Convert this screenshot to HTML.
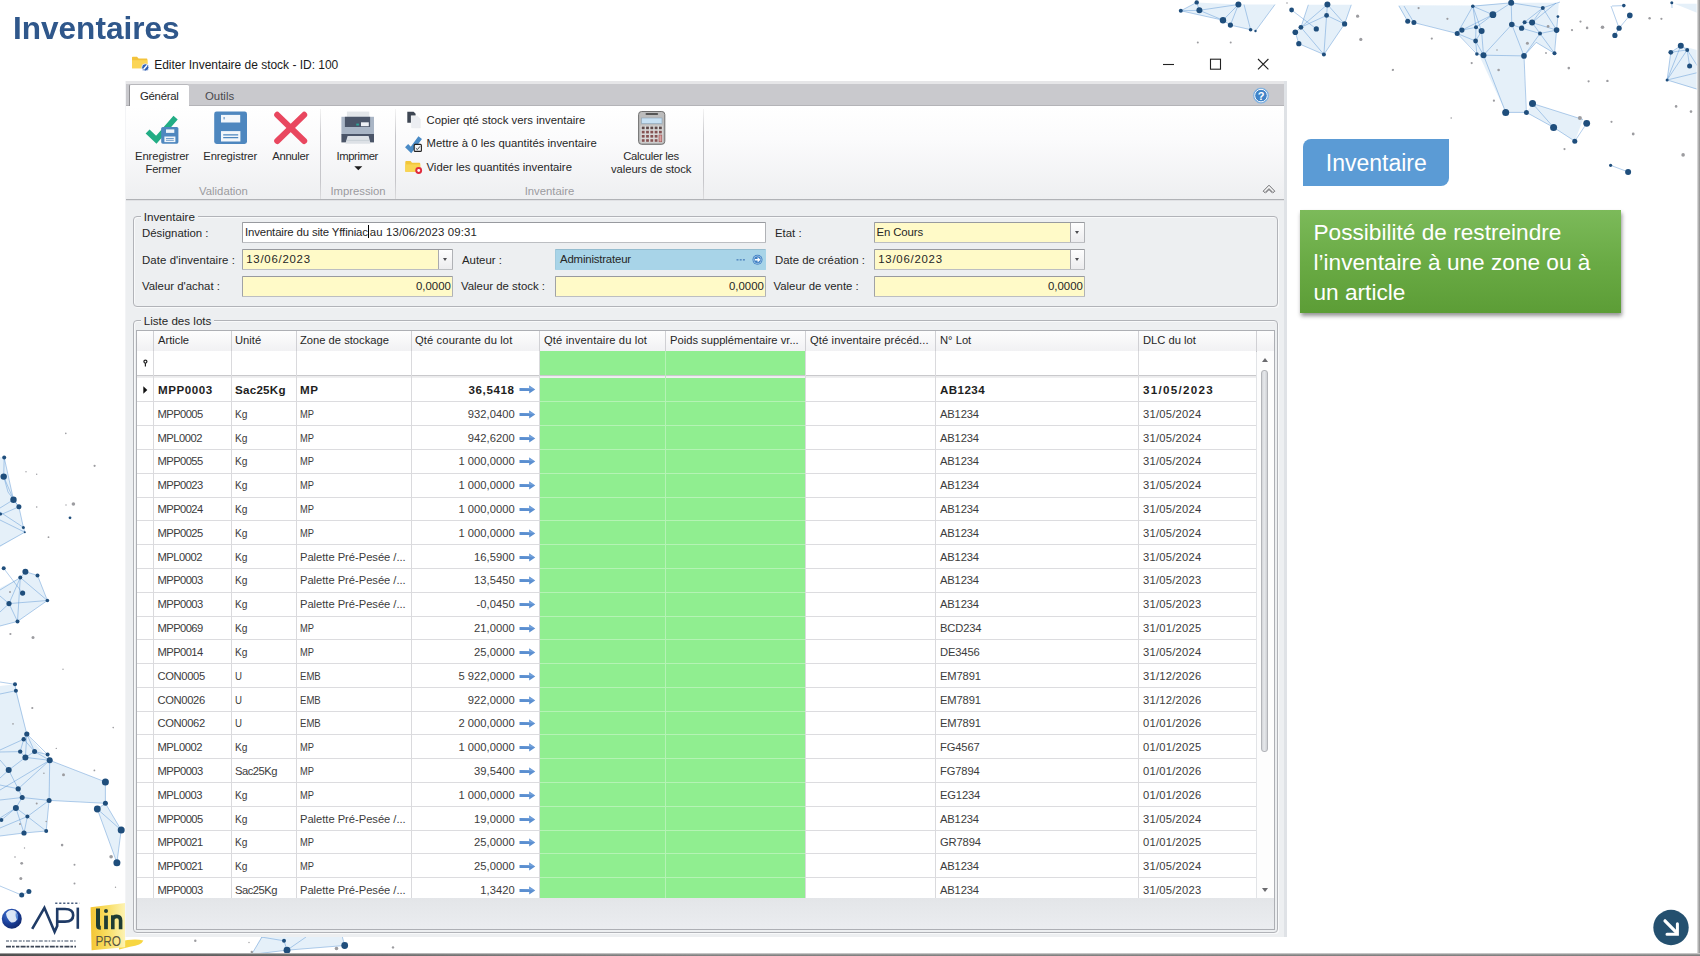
<!DOCTYPE html>
<html lang="fr">
<head>
<meta charset="utf-8">
<title>Inventaires</title>
<style>
*{box-sizing:border-box;margin:0;padding:0}
html,body{width:1700px;height:956px;overflow:hidden;background:#fff}
body{position:relative;font-family:"Liberation Sans",sans-serif;color:#222}
.abs{position:absolute}
.t{position:absolute;white-space:pre;line-height:1;font-size:11.2px;color:#262626}
#title{left:13px;top:10px;transform:translateY(0.2px);will-change:transform;font-size:31.55px;font-weight:bold;color:#2f578b;letter-spacing:0px;line-height:36px;position:absolute;white-space:pre}
#winbg{position:absolute;left:125px;top:81px;width:1162px;height:855.6px;background:#edeff1;border-right:3px solid #dfe2e6;border-left:1.5px solid #f3f4f6}
#win{position:absolute;left:126px;top:47px;width:1160px;height:890px}
#tbar{position:absolute;left:0;top:0;width:1160px;height:34px;background:transparent}
#tabs{position:absolute;left:0;top:34px;width:1158px;height:25px;background:#c9c9cd;border-top:3px solid #e6e6e8;border-bottom:1px solid #b4b4b8}
#tabon{position:absolute;left:3px;top:37px;width:60px;height:22px;background:#fff;border-left:1px solid #909094;border-top:1px solid #b8b8bc;border-radius:2px 2px 0 0}
#rib{position:absolute;left:0;top:59px;width:1158px;height:94px;background:linear-gradient(#ffffff 0%,#fbfbfc 35%,#eeeff1 100%);border-bottom:1px solid #b0b2b6;box-shadow:0 1px 0 #e0e1e4}
.vsep{position:absolute;top:62px;width:1px;height:90px;background:linear-gradient(#f4f4f4,#c6c6ca 30%,#c6c6ca 80%,#dcdcde)}
.rl{position:absolute;white-space:pre;font-size:11.3px;line-height:13px;color:#2a2a2a;text-align:center;transform:translateX(-50%)}
.gl{position:absolute;white-space:pre;font-size:11.3px;line-height:13px;color:#9b9b9f;text-align:center;transform:translateX(-50%)}
.gb{position:absolute;border:1px solid #b1b3b8;border-radius:4px;box-shadow:inset 1px 1px 0 #f8f9fa,1px 1px 0 #f8f9fa}
.gbl{position:absolute;background:#edeff1;padding:0 3px;font-size:11.4px;line-height:12px;color:#262626;white-space:pre}
.fl{position:absolute;white-space:pre;font-size:11.4px;line-height:13px;color:#262626}
.fld{position:absolute;height:21px;border:1px solid #aaaaae;border-color:#989a9f #b0b2b6 #bcbec2 #a0a2a6;border-radius:1px;font-size:11.4px;line-height:18px;color:#262626;white-space:pre;padding:0 3px;overflow:hidden}
.y{background:#fffac8}
.dd{position:absolute;right:0;top:0;width:14px;height:19px;border-left:1px solid #aaaaae;background:linear-gradient(#fefefe,#ececee)}
.dd:after{content:"";position:absolute;left:3.5px;top:7.5px;border:2.8px solid transparent;border-top:3.2px solid #4c4c50;border-bottom:none}
#grid{position:absolute;left:10px;top:283px;width:1139px;height:599px;border:1px solid #adafb4;background:linear-gradient(#e2e4e7 0%,#e2e4e7 94%,#ebedf0 100%);overflow:hidden}
#ghead{position:absolute;left:0;top:0;width:1137px;height:21px;background:linear-gradient(#fdfdfd,#f1f1f3);border-bottom:1px solid #c4c4c8}
.hc{position:absolute;top:0;height:20px;border-right:1px solid #d0d0d4;font-size:11.2px;line-height:19px;padding-left:4px;color:#262626;white-space:pre;overflow:hidden}
#gbody{position:absolute;left:0;top:21px;width:1119px;height:547px;background:#fff;overflow:hidden}
.gr{background:#90ee90}
.vl{position:absolute;top:0;width:1px;height:547px;background:#dadadd}
.vlg{position:absolute;top:0;width:1px;height:547px;background:#b4f3b4}
.hl{position:absolute;left:0;width:1119px;height:1px;background:#dcdcdf}
.hlg{position:absolute;height:1px;background:#b4f3b4}
.c{position:absolute;white-space:pre;font-size:11.2px;line-height:13px;color:#3c3c3c}
.ca{letter-spacing:-0.35px}
.b{font-weight:bold;color:#1e1e1e;font-size:11.6px}
.r{text-align:right}
</style>
</head>
<body>
<svg class="abs" style="left:0;top:0" width="1700" height="956" viewBox="0 0 1700 956">
<g fill="#cfe3f4" fill-opacity="0.55" stroke="none">
<polygon points="1180.8,10.8 1196.7,2.4 1238.4,4.5 1275.0,4.5 1255.5,31.0 1250.6,29.7 1230.4,25.1 1223.0,20.2"/>
<polygon points="1308.3,4.8 1351.3,4.8 1344.6,23.9 1323.9,54.5 1298.8,43.7 1295.3,32.3 1300.9,27.3"/>
<polygon points="1397.9,5.3 1472.2,5.6 1511.8,2.8 1558.8,2.8 1556.9,30.1 1554.1,53.3 1536.2,42.4 1524.0,55.9 1525.9,112.4 1505.7,112.4 1478.8,54.6 1457.2,33.5 1413.9,22.6 1407.3,21.1"/>
<polygon points="1532.5,103.5 1583.0,119.5 1574.8,141.2 1553.6,127.4 1526.4,112.4"/>
<polygon points="1670.8,52.3 1680.8,45.7 1700.0,50.8 1700.0,90.4 1667.1,80.0"/>
<polygon points="1674.6,3.8 1700.0,3.8 1700.0,14.1"/>
<polygon points="0.0,457.0 4.2,457.4 13.5,499.7 18.9,506.8 23.4,527.4 24.8,532.2 0.0,547.0"/>
<polygon points="0.0,588.0 20.3,577.6 25.4,571.7 37.5,575.4 47.4,600.5 17.5,621.4 0.0,626.0"/>
<polygon points="0.0,686.0 15.0,684.3 26.8,734.0 49.7,760.3 105.4,781.9 105.4,803.3 49.1,800.4 46.2,831.0 24.0,833.0 0.0,836.0"/>
<polygon points="97.3,809.0 105.4,803.3 121.2,830.1 116.9,862.7"/>
<polygon points="261.2,936.8 342.4,936.8 344.7,945.5 287.0,950.2 251.8,954.4"/>
</g>
<g stroke="#4f8dd0" stroke-width="0.7" stroke-opacity="0.62" fill="none">
<path d="M1180.8 10.8L1196.7 2.4 M1196.7 2.4L1199.4 10.3 M1199.4 10.3L1180.8 10.8 M1180.8 10.8L1223.0 20.2 M1223.0 20.2L1230.4 25.1 M1230.4 25.1L1238.4 4.5 M1238.4 4.5L1199.4 10.3 M1199.4 10.3L1223.0 20.2 M1223.0 20.2L1238.4 4.5 M1244.0 4.5L1250.6 29.7 M1275.0 4.5L1255.5 31.0 M1230.4 25.1L1250.6 29.7 M1291.6 10.0L1316.3 28.9 M1327.4 4.5L1326.6 15.4 M1326.6 15.4L1300.9 27.3 M1300.9 27.3L1295.3 32.3 M1295.3 32.3L1298.8 43.7 M1298.8 43.7L1323.9 54.5 M1323.9 54.5L1344.6 23.9 M1344.6 23.9L1327.4 4.5 M1326.6 15.4L1344.6 23.9 M1326.6 15.4L1323.9 54.5 M1300.9 27.3L1323.9 54.5 M1308.3 4.8L1300.9 27.3 M1351.3 4.8L1344.6 23.9 M1327.4 4.5L1300.9 27.3 M1407.7 21.3L1399.0 6.0 M1413.9 22.6L1404.0 6.0 M1413.9 22.6L1457.2 33.5 M1457.2 33.5L1461.9 30.1 M1461.9 30.1L1476.0 27.3 M1476.0 27.3L1481.6 31.1 M1481.6 31.1L1475.6 41.0 M1475.6 41.0L1457.2 33.5 M1472.8 6.2L1457.2 33.5 M1472.8 6.2L1476.0 27.3 M1476.0 27.3L1475.6 41.0 M1475.6 41.0L1483.5 55.2 M1483.5 55.2L1481.6 31.1 M1481.6 31.1L1472.8 6.2 M1472.8 6.2L1492.9 14.7 M1492.9 14.7L1461.9 30.1 M1492.9 14.7L1476.0 27.3 M1457.2 33.5L1476.9 54.0 M1476.9 54.0L1483.5 55.2 M1475.6 41.0L1476.9 54.0 M1472.8 6.2L1511.2 2.8 M1511.2 2.8L1511.8 24.5 M1511.8 24.5L1521.6 28.2 M1521.6 28.2L1524.6 22.2 M1524.6 22.2L1532.1 22.6 M1532.1 22.6L1542.8 7.9 M1542.8 7.9L1511.2 2.8 M1483.5 55.2L1511.8 24.5 M1483.5 55.2L1524.0 55.9 M1524.0 55.9L1511.8 24.5 M1492.9 14.7L1511.2 2.8 M1524.6 22.2L1542.8 7.9 M1532.1 22.6L1540.0 33.5 M1540.0 33.5L1556.6 30.1 M1556.6 30.1L1557.9 16.6 M1542.8 7.9L1556.6 30.1 M1556.6 30.1L1554.5 53.3 M1554.5 53.3L1540.0 33.5 M1521.6 28.2L1540.0 33.5 M1532.1 22.6L1556.6 30.1 M1524.0 55.9L1540.0 33.5 M1554.5 53.3L1536.2 42.4 M1536.2 42.4L1524.0 55.9 M1542.8 7.9L1560.0 2.0 M1532.1 22.6L1556.0 3.0 M1483.5 55.2L1505.7 112.4 M1505.7 112.4L1526.4 112.4 M1526.4 112.4L1524.0 55.9 M1526.4 112.4L1553.6 127.4 M1553.6 127.4L1574.8 141.2 M1574.8 141.2L1586.7 123.3 M1532.5 103.5L1553.6 127.4 M1532.5 103.5L1583.0 119.5 M1610.6 165.3L1628.1 171.9 M1623.8 5.6L1612.0 6.0 M1611.0 6.0L1619.1 28.2 M1629.8 15.4L1619.1 28.2 M1619.1 28.2L1614.9 35.4 M1671.8 2.8L1672.0 8.0 M1670.8 52.3L1680.8 45.7 M1680.8 45.7L1687.2 49.9 M1687.2 49.9L1689.6 65.9 M1670.8 52.3L1667.1 80.0 M1667.1 80.0L1700.0 90.0 M1680.8 45.7L1667.1 80.0 M1687.2 49.9L1700.0 70.0 M1667.1 80.0L1700.0 72.0 M1687.2 49.9L1667.1 80.0 M1670.8 52.3L1687.2 49.9 M4.2 457.4L13.5 499.7 M13.5 499.7L18.9 506.8 M18.9 506.8L23.4 527.4 M23.4 527.4L24.8 532.2 M24.8 532.2L0.0 546.0 M3.7 476.6L13.5 499.7 M4.2 457.4L3.7 476.6 M18.9 506.8L0.0 515.0 M23.4 527.4L0.0 512.0 M13.5 499.7L0.0 508.0 M3.7 476.6L8.0 492.0 M8.0 492.0L18.9 506.8 M24.8 532.2L0.0 520.0 M3.7 568.3L22.6 593.1 M20.3 577.6L25.4 571.7 M25.4 571.7L37.5 575.4 M37.5 575.4L47.4 600.5 M47.4 600.5L17.5 621.4 M17.5 621.4L9.0 603.6 M9.0 603.6L20.3 577.6 M20.3 577.6L47.4 600.5 M47.4 600.5L9.0 603.6 M9.0 603.6L0.0 596.0 M9.0 603.6L0.0 612.0 M17.5 621.4L0.0 626.0 M20.3 577.6L0.0 590.0 M20.3 577.6L17.5 621.4 M0.0 682.0L15.0 684.3 M15.0 684.3L15.9 690.7 M15.9 690.7L0.0 694.0 M15.9 690.7L26.8 734.0 M26.8 734.0L23.7 739.2 M23.7 739.2L20.2 751.6 M20.2 751.6L25.4 757.4 M25.4 757.4L34.6 751.6 M34.6 751.6L26.8 734.0 M23.7 739.2L34.6 751.6 M34.6 751.6L47.6 754.5 M47.6 754.5L49.7 760.3 M49.7 760.3L25.4 757.4 M26.8 734.0L25.4 757.4 M23.7 739.2L0.0 750.0 M20.2 751.6L0.0 752.0 M25.4 757.4L8.7 770.1 M8.7 770.1L0.0 760.0 M26.8 734.0L47.6 754.5 M34.6 751.6L49.7 760.3 M49.7 760.3L105.4 781.9 M105.4 781.9L105.4 803.3 M105.4 803.3L49.1 800.4 M49.1 800.4L49.7 760.3 M49.7 760.3L18.2 788.8 M18.2 788.8L8.7 770.1 M18.2 788.8L22.2 797.5 M22.2 797.5L15.9 807.9 M15.9 807.9L1.4 820.0 M18.2 788.8L0.0 785.0 M22.2 797.5L0.0 800.0 M49.1 800.4L22.2 797.5 M49.1 800.4L27.4 816.5 M27.4 816.5L15.9 807.9 M15.9 807.9L24.0 833.0 M24.0 833.0L46.2 831.0 M46.2 831.0L27.4 816.5 M27.4 816.5L24.0 833.0 M46.2 831.0L49.1 800.4 M24.0 833.0L0.0 836.0 M27.4 816.5L0.0 828.0 M15.9 807.9L0.0 818.0 M49.7 760.3L0.0 790.0 M8.7 770.1L0.0 778.0 M105.4 803.3L97.3 809.0 M97.3 809.0L121.2 830.1 M121.2 830.1L116.9 862.7 M116.9 862.7L97.3 809.0 M105.4 803.3L121.2 830.1 M28.9 891.6L21.7 895.1 M21.7 895.1L0.0 886.0 M261.2 937.0L284.0 940.8 M284.0 940.8L287.0 950.2 M287.0 950.2L251.8 954.4 M287.0 950.2L306.0 937.0 M287.0 950.2L344.7 945.5 M344.7 945.5L342.4 937.0 M251.8 954.0L262.0 937.0"/>
</g>
<g fill="#1f4e7c">
<circle cx="1180.8" cy="10.8" r="2.0"/>
<circle cx="1196.7" cy="2.4" r="2.2"/>
<circle cx="1199.4" cy="10.3" r="3.0"/>
<circle cx="1238.4" cy="4.5" r="3.0"/>
<circle cx="1223.0" cy="20.2" r="3.2"/>
<circle cx="1230.4" cy="25.1" r="2.6"/>
<circle cx="1250.6" cy="29.7" r="1.8"/>
<circle cx="1255.5" cy="31.0" r="1.2"/>
<circle cx="1291.6" cy="10.0" r="2.4"/>
<circle cx="1327.4" cy="4.5" r="3.0"/>
<circle cx="1326.6" cy="15.4" r="2.4"/>
<circle cx="1344.6" cy="23.9" r="2.6"/>
<circle cx="1300.9" cy="27.3" r="2.4"/>
<circle cx="1295.3" cy="32.3" r="2.8"/>
<circle cx="1316.3" cy="28.9" r="2.6"/>
<circle cx="1298.8" cy="43.7" r="2.6"/>
<circle cx="1323.9" cy="54.5" r="2.0"/>
<circle cx="1407.7" cy="21.3" r="2.5"/>
<circle cx="1413.9" cy="22.6" r="2.5"/>
<circle cx="1457.2" cy="33.5" r="2.5"/>
<circle cx="1461.9" cy="30.1" r="2.6"/>
<circle cx="1476.0" cy="27.3" r="2.0"/>
<circle cx="1481.6" cy="31.1" r="3.0"/>
<circle cx="1475.6" cy="41.0" r="2.4"/>
<circle cx="1476.9" cy="54.0" r="1.8"/>
<circle cx="1483.5" cy="55.2" r="3.0"/>
<circle cx="1492.9" cy="14.7" r="3.4"/>
<circle cx="1472.8" cy="6.2" r="1.8"/>
<circle cx="1511.2" cy="2.8" r="3.0"/>
<circle cx="1511.8" cy="24.5" r="2.8"/>
<circle cx="1521.6" cy="28.2" r="2.6"/>
<circle cx="1524.6" cy="22.2" r="2.0"/>
<circle cx="1532.1" cy="22.6" r="3.0"/>
<circle cx="1542.8" cy="7.9" r="2.0"/>
<circle cx="1540.0" cy="33.5" r="2.0"/>
<circle cx="1556.6" cy="30.1" r="2.8"/>
<circle cx="1557.9" cy="16.6" r="1.4"/>
<circle cx="1554.5" cy="53.3" r="2.0"/>
<circle cx="1524.0" cy="55.9" r="2.8"/>
<circle cx="1532.5" cy="103.5" r="3.5"/>
<circle cx="1505.7" cy="112.4" r="3.5"/>
<circle cx="1526.4" cy="112.4" r="2.5"/>
<circle cx="1553.6" cy="127.4" r="3.5"/>
<circle cx="1586.7" cy="123.3" r="3.4"/>
<circle cx="1574.8" cy="141.2" r="2.5"/>
<circle cx="1610.6" cy="165.3" r="1.6"/>
<circle cx="1628.1" cy="171.9" r="3.0"/>
<circle cx="1623.8" cy="5.6" r="1.8"/>
<circle cx="1629.8" cy="15.4" r="2.8"/>
<circle cx="1619.1" cy="28.2" r="2.6"/>
<circle cx="1614.9" cy="35.4" r="2.6"/>
<circle cx="1671.8" cy="2.8" r="1.5"/>
<circle cx="1680.8" cy="45.7" r="3.0"/>
<circle cx="1670.8" cy="52.3" r="2.4"/>
<circle cx="1687.2" cy="49.9" r="2.0"/>
<circle cx="1689.6" cy="65.9" r="2.5"/>
<circle cx="1667.1" cy="80.0" r="1.5"/>
<circle cx="4.2" cy="457.4" r="2.0"/>
<circle cx="3.7" cy="476.6" r="3.2"/>
<circle cx="13.5" cy="499.7" r="3.2"/>
<circle cx="18.9" cy="506.8" r="2.5"/>
<circle cx="23.4" cy="527.4" r="1.5"/>
<circle cx="24.8" cy="532.2" r="1.0"/>
<circle cx="0.5" cy="514.0" r="1.6"/>
<circle cx="3.7" cy="568.3" r="2.0"/>
<circle cx="25.4" cy="571.7" r="3.0"/>
<circle cx="37.5" cy="575.4" r="2.0"/>
<circle cx="20.3" cy="577.6" r="2.0"/>
<circle cx="22.6" cy="593.1" r="2.6"/>
<circle cx="9.0" cy="603.6" r="2.6"/>
<circle cx="47.4" cy="600.5" r="1.8"/>
<circle cx="17.5" cy="621.4" r="2.0"/>
<circle cx="70.0" cy="517.8" r="1.4"/>
<circle cx="15.0" cy="684.3" r="2.0"/>
<circle cx="15.9" cy="690.7" r="2.0"/>
<circle cx="26.8" cy="734.0" r="2.6"/>
<circle cx="23.7" cy="739.2" r="2.2"/>
<circle cx="20.2" cy="751.6" r="2.2"/>
<circle cx="25.4" cy="757.4" r="3.0"/>
<circle cx="34.6" cy="751.6" r="2.5"/>
<circle cx="47.6" cy="754.5" r="2.0"/>
<circle cx="49.7" cy="760.3" r="3.0"/>
<circle cx="8.7" cy="770.1" r="3.0"/>
<circle cx="18.2" cy="788.8" r="2.6"/>
<circle cx="22.2" cy="797.5" r="2.5"/>
<circle cx="15.9" cy="807.9" r="3.0"/>
<circle cx="49.1" cy="800.4" r="2.5"/>
<circle cx="27.4" cy="816.5" r="2.0"/>
<circle cx="1.4" cy="820.0" r="2.0"/>
<circle cx="24.0" cy="833.0" r="2.6"/>
<circle cx="46.2" cy="831.0" r="2.0"/>
<circle cx="105.4" cy="781.9" r="3.5"/>
<circle cx="105.4" cy="803.3" r="2.5"/>
<circle cx="97.3" cy="809.0" r="3.4"/>
<circle cx="121.2" cy="830.1" r="3.5"/>
<circle cx="116.9" cy="862.7" r="3.5"/>
<circle cx="28.9" cy="891.6" r="2.5"/>
<circle cx="21.7" cy="895.1" r="2.5"/>
<circle cx="284.0" cy="940.8" r="2.0"/>
<circle cx="287.0" cy="950.2" r="3.4"/>
<circle cx="344.7" cy="945.5" r="3.4"/>
</g>
<g fill="#9c9ca0">
<circle cx="1357.6" cy="16.2" r="1.6"/>
<circle cx="1360.8" cy="39.4" r="1.6"/>
<circle cx="1197.8" cy="42.6" r="1.0"/>
<circle cx="1230.7" cy="42.6" r="1.0"/>
<circle cx="1393.0" cy="69.6" r="0.9"/>
<circle cx="1287.0" cy="3.0" r="0.8"/>
<circle cx="1418.6" cy="8.1" r="1.1"/>
<circle cx="1431.8" cy="38.6" r="1.1"/>
<circle cx="1447.4" cy="18.8" r="1.1"/>
<circle cx="1471.7" cy="63.1" r="1.1"/>
<circle cx="1392.8" cy="70.0" r="1.1"/>
<circle cx="1498.6" cy="70.0" r="1.3"/>
<circle cx="1493.9" cy="100.7" r="1.1"/>
<circle cx="1451.2" cy="118.0" r="0.8"/>
<circle cx="1527.4" cy="43.3" r="1.5"/>
<circle cx="1548.1" cy="26.4" r="1.4"/>
<circle cx="1568.8" cy="68.1" r="1.3"/>
<circle cx="1572.0" cy="30.1" r="1.1"/>
<circle cx="1580.5" cy="21.6" r="1.1"/>
<circle cx="1587.1" cy="27.9" r="1.3"/>
<circle cx="1602.5" cy="27.3" r="1.8"/>
<circle cx="1588.6" cy="81.3" r="1.1"/>
<circle cx="1607.4" cy="80.9" r="1.2"/>
<circle cx="1579.9" cy="118.0" r="2.0"/>
<circle cx="1611.5" cy="121.8" r="1.1"/>
<circle cx="1633.2" cy="134.0" r="1.4"/>
<circle cx="1564.5" cy="149.1" r="1.1"/>
<circle cx="1649.6" cy="18.3" r="1.2"/>
<circle cx="1661.4" cy="18.8" r="1.1"/>
<circle cx="1676.1" cy="106.4" r="1.3"/>
<circle cx="1691.0" cy="111.6" r="1.3"/>
<circle cx="1683.1" cy="154.9" r="1.8"/>
<circle cx="1497.0" cy="50.0" r="0.8"/>
<circle cx="1546.0" cy="53.0" r="0.9"/>
<circle cx="65.8" cy="433.4" r="0.8"/>
<circle cx="94.6" cy="465.8" r="1.1"/>
<circle cx="26.0" cy="471.8" r="0.7"/>
<circle cx="36.7" cy="474.3" r="0.7"/>
<circle cx="36.7" cy="507.0" r="0.8"/>
<circle cx="73.4" cy="504.0" r="1.8"/>
<circle cx="66.0" cy="505.0" r="0.7"/>
<circle cx="48.5" cy="537.2" r="0.9"/>
<circle cx="10.4" cy="634.0" r="1.1"/>
<circle cx="33.0" cy="637.4" r="1.5"/>
<circle cx="63.0" cy="669.3" r="0.7"/>
<circle cx="10.0" cy="592.0" r="1.0"/>
<circle cx="32.3" cy="708.0" r="1.1"/>
<circle cx="13.0" cy="723.9" r="0.8"/>
<circle cx="113.2" cy="727.6" r="0.8"/>
<circle cx="56.3" cy="748.4" r="0.7"/>
<circle cx="63.5" cy="774.7" r="1.5"/>
<circle cx="94.4" cy="770.4" r="0.9"/>
<circle cx="43.9" cy="773.2" r="0.8"/>
<circle cx="36.7" cy="803.6" r="1.0"/>
<circle cx="46.2" cy="821.5" r="0.8"/>
<circle cx="62.1" cy="845.1" r="1.3"/>
<circle cx="24.5" cy="848.0" r="0.7"/>
<circle cx="15.0" cy="857.0" r="0.8"/>
<circle cx="21.7" cy="863.3" r="1.4"/>
<circle cx="74.5" cy="864.8" r="1.0"/>
<circle cx="20.8" cy="878.6" r="1.5"/>
<circle cx="74.5" cy="883.5" r="1.0"/>
<circle cx="111.1" cy="856.7" r="1.8"/>
<circle cx="115.5" cy="887.3" r="0.7"/>
<circle cx="20.0" cy="824.0" r="1.0"/>
<circle cx="195.3" cy="940.8" r="1.2"/>
<circle cx="336.5" cy="948.5" r="1.8"/>
<circle cx="393.0" cy="947.4" r="1.2"/>
<circle cx="251.8" cy="952.0" r="1.2"/>
<circle cx="249.0" cy="942.5" r="0.7"/>
</g>
<defs>
<radialGradient id="sph" cx="0.35" cy="0.3" r="0.8"><stop offset="0" stop-color="#3b6fd0"/><stop offset="0.55" stop-color="#1b3f99"/><stop offset="1" stop-color="#0f2466"/></radialGradient>
<linearGradient id="yel" x1="0" y1="0" x2="1" y2="0"><stop offset="0" stop-color="#f4c534"/><stop offset="0.45" stop-color="#f8dc5e"/><stop offset="1" stop-color="#fdf3b4"/></linearGradient>
<linearGradient id="rb" x1="0" y1="0" x2="1" y2="0"><stop offset="0" stop-color="#fff"/><stop offset="0.35" stop-color="#c8c8c8"/><stop offset="1" stop-color="#8c8c8c"/></linearGradient>
<linearGradient id="bb" x1="0" y1="0" x2="1" y2="0"><stop offset="0" stop-color="#3c3c3c" stop-opacity="0.75"/><stop offset="0.5" stop-color="#4a4a4a" stop-opacity="0.4"/><stop offset="1" stop-color="#666" stop-opacity="0"/></linearGradient><linearGradient id="bv" x1="0" y1="0" x2="0" y2="1"><stop offset="0" stop-color="#e4e4e4"/><stop offset="0.35" stop-color="#a4a4a4"/><stop offset="1" stop-color="#747474"/></linearGradient>
</defs>
<!-- API logo -->
<circle cx="11.8" cy="918.8" r="10" fill="url(#sph)"/>
<path d="M6 913.5 Q8.5 908.8 14 910.2 Q18.5 912.5 17.6 918.2 Q16 923 11.2 922.4 Q6.5 919 6 913.5Z" fill="#e9f1fa" opacity="0.93"/>
<path d="M15.8 912.2 Q19.2 915.6 17.6 920.6 Q15 917.4 15.8 912.2Z" fill="#3f78d2" opacity="0.8"/>
<g fill="none" stroke="#1f3b66" stroke-width="2.6" stroke-linejoin="miter">
<path d="M32.2 928.8 L44.4 907.8 L54.6 931.8 L57.2 926 V909 H65 Q73.2 909 73.2 915.3 Q73.2 921.6 65 921.6 H58"/>
<path d="M77.8 907.6 V928.8"/>
</g>
<path d="M55.2 903.2 H79.4" stroke="#4a5f80" stroke-width="1.6" stroke-dasharray="2.2 1.8"/>
<path d="M6 941 H75.6" stroke="#7c8797" stroke-width="1.5" stroke-dasharray="3 1.2 1.6 1.4 4 1.6"/>
<path d="M6 946.6 H76" stroke="#3d4656" stroke-width="1.8" stroke-dasharray="5 1 2.6 1.4 3.4 1.2"/>
<!-- lin PRO -->
<path d="M119 941.4 Q134 938.4 143.4 940.4 Q141.6 945 130 946.8 L119 949.6Z" fill="#f6d22e" opacity="0.9"/>
<path d="M90.6 907.2 L125.2 903 V947.2 L91.6 950.2Z" fill="url(#yel)"/>
<g fill="none" stroke="#1f3c34" stroke-linecap="butt">
<path d="M98 908.4 V925.4 Q98 927.8 100.8 927.8" stroke-width="4"/>
<path d="M106 915.6 V929.2" stroke-width="3.8"/>
<circle cx="106" cy="911" r="2" fill="#1f3c34" stroke="none"/>
<path d="M112.8 929.2 V915.2 M112.8 919.4 Q113.4 916.4 116.8 916.4 Q120.6 916.4 120.6 920.6 V929.2" stroke-width="3.6"/>
</g>
<text x="95.4" y="945.6" font-family="Liberation Sans, sans-serif" font-size="15.4" fill="#5a5740" textLength="25.6" lengthAdjust="spacingAndGlyphs">PRO</text>
<!-- bottom-right arrow button -->
<circle cx="1671" cy="927.5" r="17.7" fill="#24506f"/>
<path d="M1665 920.8 L1675.6 931.6" stroke="#fff" stroke-width="3.2" stroke-linecap="round"/>
<path d="M1677.4 923.8 V934.2 H1667" fill="none" stroke="#fff" stroke-width="3" stroke-linecap="round" stroke-linejoin="miter"/>
<!-- slide edges -->
<rect x="1696.6" y="0" width="3.4" height="956" fill="url(#rb)"/>
<rect x="0" y="953" width="1700" height="3" fill="url(#bv)"/><rect x="0" y="953.6" width="700" height="2.4" fill="url(#bb)"/>

</svg>
<div id="title">Inventaires</div>
<div id="winbg"></div>
<div id="win">
<div id="tbar"></div>
<div id="tabs"></div><div id="tabon"></div>
<div class="t" style="left:14px;top:43px;font-size:11.4px;line-height:13px;letter-spacing:-0.3px">Général</div>
<div class="t" style="left:79px;top:43px;font-size:11.4px;line-height:13px;color:#4a4a4e">Outils</div>
<div id="rib"></div>
<div class="vsep" style="left:194px"></div>
<div class="vsep" style="left:268.5px"></div>
<div class="vsep" style="left:576.5px"></div>
<svg class="abs" style="left:0;top:59px" width="720" height="94" viewBox="126 106 720 94">
<!-- icon1: check + small floppy -->
<path d="M147.6 131.4 L156.3 139.8 L175.6 117.6" fill="none" stroke="#22ad85" stroke-width="5.6" stroke-linecap="butt" stroke-linejoin="miter"/>
<rect x="161.2" y="126.9" width="17.2" height="16.8" rx="1.6" fill="#4e87bf"/>
<rect x="166" y="129.4" width="8.3" height="3.5" fill="#eef4fa"/>
<rect x="164.4" y="136.5" width="11" height="5.6" fill="#eef4fa"/>
<path d="M166 138.5 H173.8 M166 140.3 H173.8" stroke="#4e87bf" stroke-width="0.8"/>
<!-- icon2: floppy -->
<rect x="214.2" y="111.6" width="32.8" height="32.4" rx="2.4" fill="#4e87bf"/>
<rect x="221" y="114.9" width="19.2" height="7.6" fill="#f3f7fb"/>
<rect x="223.6" y="117" width="1" height="2.4" fill="#4e87bf"/>
<rect x="221" y="131.1" width="19.4" height="10.4" fill="#f3f7fb"/>
<path d="M223.2 134.9 H238.2 M223.2 137.7 H238.2" stroke="#4e87bf" stroke-width="1.2"/>
<!-- icon3: red X -->
<path d="M277.2 114.8 L304.2 141 M304.2 114.8 L277.2 141" stroke="#e9475f" stroke-width="6" stroke-linecap="round"/>
<!-- printer -->
<rect x="346.9" y="111.6" width="22.4" height="6" fill="#e3e6e9"/>
<rect x="341.4" y="116.8" width="32.6" height="17.6" fill="#a9b5c5"/>
<rect x="344.9" y="116.8" width="25.2" height="10.2" fill="#4b5568"/>
<rect x="356.3" y="123.6" width="2.6" height="1.9" fill="#2ea89a"/>
<rect x="361" y="122.3" width="7.8" height="3.9" fill="#eef1f5"/>
<rect x="341.4" y="134" width="32.6" height="8.4" fill="#4b5568"/>
<path d="M347.6 136 H368.6 L370.6 143.8 H345.4Z" fill="#dde1e6"/>
<path d="M346.4 140.4 H369.8" stroke="#c2c8d0" stroke-width="0.7"/>
<path d="M354.3 166.2 H362.3 L358.3 170.2Z" fill="#1c1c1c"/>
<!-- small 1: copy -->
<path d="M407.3 111.8 H413.6 L415.6 113.8 V115.6 H410.9 V122.8 H407.3Z" fill="#3e4653"/>
<path d="M411.6 116.2 H417.4 L420.3 119 V127.8 H411.6Z" fill="#eceef2" stroke="#e0e3e8" stroke-width="0.4"/>
<!-- small 2: check + box -->
<path d="M406.6 145.6 L411 150 L420.2 137.6" fill="none" stroke="#4a8bc6" stroke-width="4.4"/>
<rect x="414.2" y="144.4" width="7.2" height="7" rx="1" fill="#f4f6f8" stroke="#222" stroke-width="1.1"/>
<path d="M415.8 148.2 L417.4 149.6 L420 146.4" fill="none" stroke="#333" stroke-width="0.9"/>
<!-- small 3: folder + red -->
<path d="M405.3 162 Q405.3 161.1 406.2 161.1 H410.6 L412 162.8 H419.4 Q420.2 162.8 420.2 163.6 V171.7 H405.3Z" fill="#f2c63a"/>
<path d="M405.3 164.4 H420.2 V171.7 H405.3Z" fill="#f8d552"/>
<circle cx="418.7" cy="170.5" r="3.4" fill="#e02b3c"/>
<circle cx="418.7" cy="170.5" r="1.4" fill="#fff"/>
<!-- calculator -->
<rect x="638.6" y="111.5" width="26.2" height="32.8" rx="3" fill="#bcbcbc" stroke="#707070" stroke-width="1"/>
<rect x="645.5" y="113.1" width="12.6" height="2" rx="1" fill="#555"/>
<rect x="641.6" y="118" width="20.4" height="5.6" fill="#c6e0f3" stroke="#8aa2b6" stroke-width="0.6"/>
<g fill="#d9d9d9"><rect x="640.6" y="125.6" width="22.2" height="17"/></g>
<g fill="#5c4a4a">
<rect x="641.8" y="126.6" width="2.8" height="2.6"/><rect x="646.1" y="126.6" width="2.8" height="2.6"/><rect x="650.4" y="126.6" width="2.8" height="2.6"/><rect x="654.7" y="126.6" width="2.8" height="2.6"/><rect x="659" y="126.6" width="2.8" height="2.6"/>
</g>
<g fill="#855252">
<rect x="641.8" y="130.8" width="2.8" height="2.6"/><rect x="646.1" y="130.8" width="2.8" height="2.6"/><rect x="650.4" y="130.8" width="2.8" height="2.6"/><rect x="654.7" y="130.8" width="2.8" height="2.6"/><rect x="659" y="130.8" width="2.8" height="2.6"/>
<rect x="641.8" y="135" width="2.8" height="2.6"/><rect x="646.1" y="135" width="2.8" height="2.6"/><rect x="650.4" y="135" width="2.8" height="2.6"/><rect x="654.7" y="135" width="2.8" height="2.6"/>
<rect x="641.8" y="139.2" width="2.8" height="2.6"/><rect x="646.1" y="139.2" width="2.8" height="2.6"/><rect x="650.4" y="139.2" width="2.8" height="2.6"/><rect x="654.7" y="139.2" width="2.8" height="2.6"/>
</g>
<rect x="659" y="135" width="2.8" height="6.8" fill="#d9a0a0" stroke="#9a4a4a" stroke-width="0.6"/>
</svg>
<div class="rl" style="left:36px;top:102.5px;letter-spacing:-0.12px">Enregistrer</div>
<div class="rl" style="left:37.3px;top:115.6px;letter-spacing:-0.1px">Fermer</div>
<div class="rl" style="left:104.2px;top:102.5px;letter-spacing:-0.12px">Enregistrer</div>
<div class="rl" style="left:164.6px;top:102.5px;letter-spacing:-0.3px">Annuler</div>
<div class="rl" style="left:231.2px;top:102.5px;letter-spacing:-0.38px">Imprimer</div>
<div class="rl" style="left:525px;top:102.8px;letter-spacing:-0.28px">Calculer les</div>
<div class="rl" style="left:525.2px;top:116.1px;letter-spacing:-0.08px">valeurs de stock</div>
<div class="t" style="left:300.5px;top:66.5px;font-size:11.3px;line-height:13px;letter-spacing:0.02px">Copier qté stock vers inventaire</div>
<div class="t" style="left:300.5px;top:90.2px;font-size:11.3px;line-height:13px;letter-spacing:0.02px">Mettre à 0 les quantités inventaire</div>
<div class="t" style="left:300.5px;top:113.8px;font-size:11.3px;line-height:13px;letter-spacing:0.02px">Vider les quantités inventaire</div>
<div class="gl" style="left:97.5px;top:137.5px">Validation</div>
<div class="gl" style="left:232px;top:137.5px">Impression</div>
<div class="gl" style="left:423.5px;top:137.5px">Inventaire</div>

<svg class="abs" style="left:5px;top:9px" width="20" height="16" viewBox="0 0 20 16">
<path d="M1 1.6 Q1 0.8 1.8 0.8 H6 L7.6 2.6 H15.6 Q16.4 2.6 16.4 3.4 V12.2 H1Z" fill="#f3c33c"/>
<path d="M1 4.2 H16.4 V12.2 H1Z" fill="#fbd556"/>
<circle cx="14.3" cy="11.4" r="3.6" fill="#2f5fb3" stroke="#fff" stroke-width="0.8"/>
<path d="M12.9 13 L15.7 9.8" stroke="#fff" stroke-width="1.5" stroke-linecap="round"/>
</svg>
<div class="t" style="left:28.2px;top:10.5px;font-size:12px;line-height:14px;color:#1a1a1a;letter-spacing:-0.02px">Editer Inventaire de stock - ID: 100</div>
<svg class="abs" style="left:1030px;top:8px" width="120" height="20" viewBox="0 0 120 20">
<path d="M7 9.5 H18" stroke="#222" stroke-width="1.1"/>
<rect x="54.5" y="4.2" width="10" height="10" fill="none" stroke="#222" stroke-width="1.1"/>
<path d="M102 4 L112.4 14.4 M112.4 4 L102 14.4" stroke="#222" stroke-width="1.1"/>
</svg>
<svg class="abs" style="left:1126px;top:39.5px" width="18" height="18" viewBox="0 0 18 18">
<circle cx="9" cy="8.6" r="7.6" fill="#5f9bd6" stroke="#8fbbe6" stroke-width="0.8"/>
<circle cx="9" cy="8.6" r="6.3" fill="#3f83c8" stroke="#fff" stroke-width="1"/>
<text x="9" y="12.6" font-family="Liberation Sans, sans-serif" font-weight="bold" font-size="11" fill="#fff" text-anchor="middle">?</text>
</svg>
<svg class="abs" style="left:1136px;top:136px" width="14" height="11" viewBox="0 0 14 11">
<path d="M1.2 8.2 L7 2.2 L12.8 8.2 L11 9.6 L7 5.6 L3 9.6 Z" fill="#f6f6f6" stroke="#6e6e72" stroke-width="1"/>
<path d="M3.6 9.9 L7 6.6 L10.4 9.9" fill="none" stroke="#6e6e72" stroke-width="1"/>
</svg>

<div class="gb" style="left:7px;top:169px;width:1145px;height:91px"></div>
<div class="gbl" style="left:14.7px;top:164px;font-size:11.7px">Inventaire</div>
<div class="gb" style="left:7px;top:273px;width:1145px;height:613px"></div>
<div class="gbl" style="left:14.7px;top:267.5px;font-size:11.6px">Liste des lots</div>
<div class="fl" style="left:16px;top:180.0px;">Désignation :</div>
<div class="fl" style="left:16px;top:207.0px;letter-spacing:0.08px">Date d'inventaire :</div>
<div class="fl" style="left:16px;top:233.0px;">Valeur d'achat :</div>
<div class="fl" style="left:336px;top:207.0px;">Auteur :</div>
<div class="fl" style="left:335px;top:233.0px;">Valeur de stock :</div>
<div class="fl" style="left:649px;top:180.0px;">Etat :</div>
<div class="fl" style="left:649px;top:207.0px;">Date de création :</div>
<div class="fl" style="left:647.5px;top:233.0px;">Valeur de vente :</div>
<div class="fld " style="left:116px;top:175px;width:524px;background:#fff;padding-left:2px"><span style="letter-spacing:-0.15px">Inventaire du site Yffiniac</span><span style="display:inline-block;width:1px;height:13px;background:#000;vertical-align:-2px;margin:0 0.5px"></span><span style="letter-spacing:0.14px">au 13/06/2023 09:31</span></div>
<div class="fld y" style="left:116px;top:202px;width:211px;padding-left:3.2px"><span style="letter-spacing:0.76px">13/06/2023</span><div class="dd"></div></div>
<div class="fld y" style="left:116px;top:229px;width:211px;text-align:right;padding-right:1.2px">0,0000</div>
<div class="fld " style="left:429px;top:202px;width:211px;background:#a8d4e8;border-color:#94bccf #a8d4e8 #a8d4e8 #a0cadd;padding-left:4px"><span style="letter-spacing:-0.18px">Administrateur</span><svg style="position:absolute;left:180px;top:4px" width="28" height="12" viewBox="0 0 28 12"><g fill="#5b8fc4"><rect x="0.5" y="5" width="2" height="1.6"/><rect x="3.7" y="5" width="2" height="1.6"/><rect x="6.9" y="5" width="2" height="1.6"/></g><circle cx="21.5" cy="5.8" r="5" fill="#3d7fc4"/><circle cx="21.5" cy="5.8" r="3.9" fill="none" stroke="#cfe3f5" stroke-width="0.6"/><path d="M18.8 5 h2.8 v-1.9 l3 2.7 -3 2.7 v-1.9 h-2.8z" fill="#fff"/></svg></div>
<div class="fld y" style="left:429px;top:229px;width:211px;text-align:right;padding-right:1.2px">0,0000</div>
<div class="fld y" style="left:748px;top:175px;width:211px;padding-left:1.4px"><span style="letter-spacing:-0.1px">En Cours</span><div class="dd"></div></div>
<div class="fld y" style="left:748px;top:202px;width:211px;padding-left:3.2px"><span style="letter-spacing:0.76px">13/06/2023</span><div class="dd"></div></div>
<div class="fld y" style="left:748px;top:229px;width:211px;text-align:right;padding-right:1.2px">0,0000</div>
<div id="grid" style="left:10px;top:283px;width:1139px;height:600px">
<div id="ghead">
<div class="hc" style="left:0px;width:17px;letter-spacing:0px;padding-left:4px"></div>
<div class="hc" style="left:17px;width:78px;letter-spacing:0px;padding-left:4px">Article</div>
<div class="hc" style="left:95px;width:65px;letter-spacing:0px;padding-left:3px">Unité</div>
<div class="hc" style="left:160px;width:115px;letter-spacing:0px;padding-left:3px">Zone de stockage</div>
<div class="hc" style="left:275px;width:128px;letter-spacing:0.12px;padding-left:3px">Qté courante du lot</div>
<div class="hc" style="left:403px;width:126px;letter-spacing:0.14px;padding-left:4px">Qté inventaire du lot</div>
<div class="hc" style="left:529px;width:140px;letter-spacing:0px;padding-left:4px">Poids supplémentaire vr...</div>
<div class="hc" style="left:669px;width:130px;letter-spacing:0.1px;padding-left:4px">Qté inventaire précéd...</div>
<div class="hc" style="left:799px;width:203px;letter-spacing:0px;padding-left:4px">N° Lot</div>
<div class="hc" style="left:1002px;width:118px;letter-spacing:0px;padding-left:4px">DLC du lot</div>
<div class="hc" style="left:1120px;width:18px;letter-spacing:0px;padding-left:4px"></div>
</div>
<div id="gbody" style="top:20px">
<div class="abs gr" style="left:403px;top:0;width:265px;height:547px"></div>
<div class="abs" style="left:0;top:23.5px;width:1119px;height:3.5px;background:linear-gradient(#c9c9cc 0,#c9c9cc 30%,#e9e9eb 30%,#f1f1f2 100%)"></div>
<div class="c b" style="left:21.0px;top:31.8px;letter-spacing:0.55px">MPP0003</div>
<div class="c b" style="left:98px;top:31.8px;letter-spacing:0.25px">Sac25Kg</div>
<div class="c b" style="left:163px;top:31.8px;letter-spacing:0.6px">MP</div>
<div class="c b r" style="left:283px;width:94.70000000000005px;top:31.8px;letter-spacing:0.62px">36,5418</div>
<svg class="abs" style="left:381.9px;top:33.8px" width="17" height="9" viewBox="0 0 17 9"><path d="M0.5 3.1 H10.2 V0.4 L16.2 4.5 L10.2 8.6 V5.9 H0.5 Z" fill="#5b8fd0"/><path d="M0.5 3.1 H10.2 V0.4 L16.2 4.5 Z" fill="#7aa7de" opacity=".7"/></svg>
<div class="c b" style="left:803px;top:31.8px;letter-spacing:0.42px">AB1234</div>
<div class="c b" style="left:1006px;top:31.8px;letter-spacing:1.3px">31/05/2023</div>
<div class="hl" style="top:50px"></div>
<div class="hlg" style="top:50px;left:403px;width:265px"></div>
<div class="c" style="left:20.5px;top:56.71px;letter-spacing:-0.564px">MPP0005</div>
<div class="c" style="left:98px;top:56.71px;transform:scaleX(0.912);transform-origin:0 50%">Kg</div>
<div class="c" style="left:163px;top:56.71px;transform:scaleX(0.833);transform-origin:0 50%">MP</div>
<div class="c r" style="left:283px;width:94.70000000000005px;top:56.71px;letter-spacing:0.02px">932,0400</div>
<svg class="abs" style="left:381.9px;top:58.71px" width="17" height="9" viewBox="0 0 17 9"><path d="M0.5 3.1 H10.2 V0.4 L16.2 4.5 L10.2 8.6 V5.9 H0.5 Z" fill="#5b8fd0"/><path d="M0.5 3.1 H10.2 V0.4 L16.2 4.5 Z" fill="#7aa7de" opacity=".7"/></svg>
<div class="c" style="left:803px;top:56.71px;letter-spacing:-0.15px">AB1234</div>
<div class="c" style="left:1006px;top:56.71px;letter-spacing:0.25px">31/05/2024</div>
<div class="hl" style="top:74px"></div>
<div class="hlg" style="top:74px;left:403px;width:265px"></div>
<div class="c" style="left:20.5px;top:80.53px;letter-spacing:-0.49px">MPL0002</div>
<div class="c" style="left:98px;top:80.53px;transform:scaleX(0.912);transform-origin:0 50%">Kg</div>
<div class="c" style="left:163px;top:80.53px;transform:scaleX(0.833);transform-origin:0 50%">MP</div>
<div class="c r" style="left:283px;width:94.70000000000005px;top:80.53px;letter-spacing:0.02px">942,6200</div>
<svg class="abs" style="left:381.9px;top:82.53px" width="17" height="9" viewBox="0 0 17 9"><path d="M0.5 3.1 H10.2 V0.4 L16.2 4.5 L10.2 8.6 V5.9 H0.5 Z" fill="#5b8fd0"/><path d="M0.5 3.1 H10.2 V0.4 L16.2 4.5 Z" fill="#7aa7de" opacity=".7"/></svg>
<div class="c" style="left:803px;top:80.53px;letter-spacing:-0.15px">AB1234</div>
<div class="c" style="left:1006px;top:80.53px;letter-spacing:0.25px">31/05/2024</div>
<div class="hl" style="top:98px"></div>
<div class="hlg" style="top:98px;left:403px;width:265px"></div>
<div class="c" style="left:20.5px;top:104.34px;letter-spacing:-0.564px">MPP0055</div>
<div class="c" style="left:98px;top:104.34px;transform:scaleX(0.912);transform-origin:0 50%">Kg</div>
<div class="c" style="left:163px;top:104.34px;transform:scaleX(0.833);transform-origin:0 50%">MP</div>
<div class="c r" style="left:283px;width:94.70000000000005px;top:104.34px;letter-spacing:0.02px">1 000,0000</div>
<svg class="abs" style="left:381.9px;top:106.34px" width="17" height="9" viewBox="0 0 17 9"><path d="M0.5 3.1 H10.2 V0.4 L16.2 4.5 L10.2 8.6 V5.9 H0.5 Z" fill="#5b8fd0"/><path d="M0.5 3.1 H10.2 V0.4 L16.2 4.5 Z" fill="#7aa7de" opacity=".7"/></svg>
<div class="c" style="left:803px;top:104.34px;letter-spacing:-0.15px">AB1234</div>
<div class="c" style="left:1006px;top:104.34px;letter-spacing:0.25px">31/05/2024</div>
<div class="hl" style="top:122px"></div>
<div class="hlg" style="top:122px;left:403px;width:265px"></div>
<div class="c" style="left:20.5px;top:128.16px;letter-spacing:-0.564px">MPP0023</div>
<div class="c" style="left:98px;top:128.16px;transform:scaleX(0.912);transform-origin:0 50%">Kg</div>
<div class="c" style="left:163px;top:128.16px;transform:scaleX(0.833);transform-origin:0 50%">MP</div>
<div class="c r" style="left:283px;width:94.70000000000005px;top:128.16px;letter-spacing:0.02px">1 000,0000</div>
<svg class="abs" style="left:381.9px;top:130.16px" width="17" height="9" viewBox="0 0 17 9"><path d="M0.5 3.1 H10.2 V0.4 L16.2 4.5 L10.2 8.6 V5.9 H0.5 Z" fill="#5b8fd0"/><path d="M0.5 3.1 H10.2 V0.4 L16.2 4.5 Z" fill="#7aa7de" opacity=".7"/></svg>
<div class="c" style="left:803px;top:128.16px;letter-spacing:-0.15px">AB1234</div>
<div class="c" style="left:1006px;top:128.16px;letter-spacing:0.25px">31/05/2024</div>
<div class="hl" style="top:146px"></div>
<div class="hlg" style="top:146px;left:403px;width:265px"></div>
<div class="c" style="left:20.5px;top:151.97px;letter-spacing:-0.564px">MPP0024</div>
<div class="c" style="left:98px;top:151.97px;transform:scaleX(0.912);transform-origin:0 50%">Kg</div>
<div class="c" style="left:163px;top:151.97px;transform:scaleX(0.833);transform-origin:0 50%">MP</div>
<div class="c r" style="left:283px;width:94.70000000000005px;top:151.97px;letter-spacing:0.02px">1 000,0000</div>
<svg class="abs" style="left:381.9px;top:153.97px" width="17" height="9" viewBox="0 0 17 9"><path d="M0.5 3.1 H10.2 V0.4 L16.2 4.5 L10.2 8.6 V5.9 H0.5 Z" fill="#5b8fd0"/><path d="M0.5 3.1 H10.2 V0.4 L16.2 4.5 Z" fill="#7aa7de" opacity=".7"/></svg>
<div class="c" style="left:803px;top:151.97px;letter-spacing:-0.15px">AB1234</div>
<div class="c" style="left:1006px;top:151.97px;letter-spacing:0.25px">31/05/2024</div>
<div class="hl" style="top:169px"></div>
<div class="hlg" style="top:169px;left:403px;width:265px"></div>
<div class="c" style="left:20.5px;top:175.79px;letter-spacing:-0.564px">MPP0025</div>
<div class="c" style="left:98px;top:175.79px;transform:scaleX(0.912);transform-origin:0 50%">Kg</div>
<div class="c" style="left:163px;top:175.79px;transform:scaleX(0.833);transform-origin:0 50%">MP</div>
<div class="c r" style="left:283px;width:94.70000000000005px;top:175.79px;letter-spacing:0.02px">1 000,0000</div>
<svg class="abs" style="left:381.9px;top:177.79px" width="17" height="9" viewBox="0 0 17 9"><path d="M0.5 3.1 H10.2 V0.4 L16.2 4.5 L10.2 8.6 V5.9 H0.5 Z" fill="#5b8fd0"/><path d="M0.5 3.1 H10.2 V0.4 L16.2 4.5 Z" fill="#7aa7de" opacity=".7"/></svg>
<div class="c" style="left:803px;top:175.79px;letter-spacing:-0.15px">AB1234</div>
<div class="c" style="left:1006px;top:175.79px;letter-spacing:0.25px">31/05/2024</div>
<div class="hl" style="top:193px"></div>
<div class="hlg" style="top:193px;left:403px;width:265px"></div>
<div class="c" style="left:20.5px;top:199.6px;letter-spacing:-0.49px">MPL0002</div>
<div class="c" style="left:98px;top:199.6px;transform:scaleX(0.912);transform-origin:0 50%">Kg</div>
<div class="c" style="left:163px;top:199.6px;letter-spacing:-0.031px">Palette Pré-Pesée /...</div>
<div class="c r" style="left:283px;width:94.70000000000005px;top:199.6px;letter-spacing:0.02px">16,5900</div>
<svg class="abs" style="left:381.9px;top:201.6px" width="17" height="9" viewBox="0 0 17 9"><path d="M0.5 3.1 H10.2 V0.4 L16.2 4.5 L10.2 8.6 V5.9 H0.5 Z" fill="#5b8fd0"/><path d="M0.5 3.1 H10.2 V0.4 L16.2 4.5 Z" fill="#7aa7de" opacity=".7"/></svg>
<div class="c" style="left:803px;top:199.6px;letter-spacing:-0.15px">AB1234</div>
<div class="c" style="left:1006px;top:199.6px;letter-spacing:0.25px">31/05/2024</div>
<div class="hl" style="top:217px"></div>
<div class="hlg" style="top:217px;left:403px;width:265px"></div>
<div class="c" style="left:20.5px;top:223.42px;letter-spacing:-0.564px">MPP0003</div>
<div class="c" style="left:98px;top:223.42px;transform:scaleX(0.912);transform-origin:0 50%">Kg</div>
<div class="c" style="left:163px;top:223.42px;letter-spacing:-0.031px">Palette Pré-Pesée /...</div>
<div class="c r" style="left:283px;width:94.70000000000005px;top:223.42px;letter-spacing:0.02px">13,5450</div>
<svg class="abs" style="left:381.9px;top:225.42px" width="17" height="9" viewBox="0 0 17 9"><path d="M0.5 3.1 H10.2 V0.4 L16.2 4.5 L10.2 8.6 V5.9 H0.5 Z" fill="#5b8fd0"/><path d="M0.5 3.1 H10.2 V0.4 L16.2 4.5 Z" fill="#7aa7de" opacity=".7"/></svg>
<div class="c" style="left:803px;top:223.42px;letter-spacing:-0.15px">AB1234</div>
<div class="c" style="left:1006px;top:223.42px;letter-spacing:0.25px">31/05/2023</div>
<div class="hl" style="top:241px"></div>
<div class="hlg" style="top:241px;left:403px;width:265px"></div>
<div class="c" style="left:20.5px;top:247.24px;letter-spacing:-0.564px">MPP0003</div>
<div class="c" style="left:98px;top:247.24px;transform:scaleX(0.912);transform-origin:0 50%">Kg</div>
<div class="c" style="left:163px;top:247.24px;letter-spacing:-0.031px">Palette Pré-Pesée /...</div>
<div class="c r" style="left:283px;width:94.70000000000005px;top:247.24px;letter-spacing:0.02px">-0,0450</div>
<svg class="abs" style="left:381.9px;top:249.24px" width="17" height="9" viewBox="0 0 17 9"><path d="M0.5 3.1 H10.2 V0.4 L16.2 4.5 L10.2 8.6 V5.9 H0.5 Z" fill="#5b8fd0"/><path d="M0.5 3.1 H10.2 V0.4 L16.2 4.5 Z" fill="#7aa7de" opacity=".7"/></svg>
<div class="c" style="left:803px;top:247.24px;letter-spacing:-0.15px">AB1234</div>
<div class="c" style="left:1006px;top:247.24px;letter-spacing:0.25px">31/05/2023</div>
<div class="hl" style="top:265px"></div>
<div class="hlg" style="top:265px;left:403px;width:265px"></div>
<div class="c" style="left:20.5px;top:271.05px;letter-spacing:-0.564px">MPP0069</div>
<div class="c" style="left:98px;top:271.05px;transform:scaleX(0.912);transform-origin:0 50%">Kg</div>
<div class="c" style="left:163px;top:271.05px;transform:scaleX(0.833);transform-origin:0 50%">MP</div>
<div class="c r" style="left:283px;width:94.70000000000005px;top:271.05px;letter-spacing:0.02px">21,0000</div>
<svg class="abs" style="left:381.9px;top:273.05px" width="17" height="9" viewBox="0 0 17 9"><path d="M0.5 3.1 H10.2 V0.4 L16.2 4.5 L10.2 8.6 V5.9 H0.5 Z" fill="#5b8fd0"/><path d="M0.5 3.1 H10.2 V0.4 L16.2 4.5 Z" fill="#7aa7de" opacity=".7"/></svg>
<div class="c" style="left:803px;top:271.05px;letter-spacing:-0.15px">BCD234</div>
<div class="c" style="left:1006px;top:271.05px;letter-spacing:0.25px">31/01/2025</div>
<div class="hl" style="top:288px"></div>
<div class="hlg" style="top:288px;left:403px;width:265px"></div>
<div class="c" style="left:20.5px;top:294.87px;letter-spacing:-0.564px">MPP0014</div>
<div class="c" style="left:98px;top:294.87px;transform:scaleX(0.912);transform-origin:0 50%">Kg</div>
<div class="c" style="left:163px;top:294.87px;transform:scaleX(0.833);transform-origin:0 50%">MP</div>
<div class="c r" style="left:283px;width:94.70000000000005px;top:294.87px;letter-spacing:0.02px">25,0000</div>
<svg class="abs" style="left:381.9px;top:296.87px" width="17" height="9" viewBox="0 0 17 9"><path d="M0.5 3.1 H10.2 V0.4 L16.2 4.5 L10.2 8.6 V5.9 H0.5 Z" fill="#5b8fd0"/><path d="M0.5 3.1 H10.2 V0.4 L16.2 4.5 Z" fill="#7aa7de" opacity=".7"/></svg>
<div class="c" style="left:803px;top:294.87px;letter-spacing:-0.15px">DE3456</div>
<div class="c" style="left:1006px;top:294.87px;letter-spacing:0.25px">31/05/2024</div>
<div class="hl" style="top:312px"></div>
<div class="hlg" style="top:312px;left:403px;width:265px"></div>
<div class="c" style="left:20.5px;top:318.68px;letter-spacing:-0.35px">CON0005</div>
<div class="c" style="left:98px;top:318.68px;transform:scaleX(0.865);transform-origin:0 50%">U</div>
<div class="c" style="left:163px;top:318.68px;transform:scaleX(0.855);transform-origin:0 50%">EMB</div>
<div class="c r" style="left:283px;width:94.70000000000005px;top:318.68px;letter-spacing:0.02px">5 922,0000</div>
<svg class="abs" style="left:381.9px;top:320.68px" width="17" height="9" viewBox="0 0 17 9"><path d="M0.5 3.1 H10.2 V0.4 L16.2 4.5 L10.2 8.6 V5.9 H0.5 Z" fill="#5b8fd0"/><path d="M0.5 3.1 H10.2 V0.4 L16.2 4.5 Z" fill="#7aa7de" opacity=".7"/></svg>
<div class="c" style="left:803px;top:318.68px;letter-spacing:-0.15px">EM7891</div>
<div class="c" style="left:1006px;top:318.68px;letter-spacing:0.25px">31/12/2026</div>
<div class="hl" style="top:336px"></div>
<div class="hlg" style="top:336px;left:403px;width:265px"></div>
<div class="c" style="left:20.5px;top:342.5px;letter-spacing:-0.35px">CON0026</div>
<div class="c" style="left:98px;top:342.5px;transform:scaleX(0.865);transform-origin:0 50%">U</div>
<div class="c" style="left:163px;top:342.5px;transform:scaleX(0.855);transform-origin:0 50%">EMB</div>
<div class="c r" style="left:283px;width:94.70000000000005px;top:342.5px;letter-spacing:0.02px">922,0000</div>
<svg class="abs" style="left:381.9px;top:344.5px" width="17" height="9" viewBox="0 0 17 9"><path d="M0.5 3.1 H10.2 V0.4 L16.2 4.5 L10.2 8.6 V5.9 H0.5 Z" fill="#5b8fd0"/><path d="M0.5 3.1 H10.2 V0.4 L16.2 4.5 Z" fill="#7aa7de" opacity=".7"/></svg>
<div class="c" style="left:803px;top:342.5px;letter-spacing:-0.15px">EM7891</div>
<div class="c" style="left:1006px;top:342.5px;letter-spacing:0.25px">31/12/2026</div>
<div class="hl" style="top:360px"></div>
<div class="hlg" style="top:360px;left:403px;width:265px"></div>
<div class="c" style="left:20.5px;top:366.31px;letter-spacing:-0.35px">CON0062</div>
<div class="c" style="left:98px;top:366.31px;transform:scaleX(0.865);transform-origin:0 50%">U</div>
<div class="c" style="left:163px;top:366.31px;transform:scaleX(0.855);transform-origin:0 50%">EMB</div>
<div class="c r" style="left:283px;width:94.70000000000005px;top:366.31px;letter-spacing:0.02px">2 000,0000</div>
<svg class="abs" style="left:381.9px;top:368.31px" width="17" height="9" viewBox="0 0 17 9"><path d="M0.5 3.1 H10.2 V0.4 L16.2 4.5 L10.2 8.6 V5.9 H0.5 Z" fill="#5b8fd0"/><path d="M0.5 3.1 H10.2 V0.4 L16.2 4.5 Z" fill="#7aa7de" opacity=".7"/></svg>
<div class="c" style="left:803px;top:366.31px;letter-spacing:-0.15px">EM7891</div>
<div class="c" style="left:1006px;top:366.31px;letter-spacing:0.25px">01/01/2026</div>
<div class="hl" style="top:383px"></div>
<div class="hlg" style="top:383px;left:403px;width:265px"></div>
<div class="c" style="left:20.5px;top:390.12px;letter-spacing:-0.49px">MPL0002</div>
<div class="c" style="left:98px;top:390.12px;transform:scaleX(0.912);transform-origin:0 50%">Kg</div>
<div class="c" style="left:163px;top:390.12px;transform:scaleX(0.833);transform-origin:0 50%">MP</div>
<div class="c r" style="left:283px;width:94.70000000000005px;top:390.12px;letter-spacing:0.02px">1 000,0000</div>
<svg class="abs" style="left:381.9px;top:392.12px" width="17" height="9" viewBox="0 0 17 9"><path d="M0.5 3.1 H10.2 V0.4 L16.2 4.5 L10.2 8.6 V5.9 H0.5 Z" fill="#5b8fd0"/><path d="M0.5 3.1 H10.2 V0.4 L16.2 4.5 Z" fill="#7aa7de" opacity=".7"/></svg>
<div class="c" style="left:803px;top:390.12px;letter-spacing:-0.15px">FG4567</div>
<div class="c" style="left:1006px;top:390.12px;letter-spacing:0.25px">01/01/2025</div>
<div class="hl" style="top:407px"></div>
<div class="hlg" style="top:407px;left:403px;width:265px"></div>
<div class="c" style="left:20.5px;top:413.94px;letter-spacing:-0.564px">MPP0003</div>
<div class="c" style="left:98px;top:413.94px;letter-spacing:-0.492px">Sac25Kg</div>
<div class="c" style="left:163px;top:413.94px;transform:scaleX(0.833);transform-origin:0 50%">MP</div>
<div class="c r" style="left:283px;width:94.70000000000005px;top:413.94px;letter-spacing:0.02px">39,5400</div>
<svg class="abs" style="left:381.9px;top:415.94px" width="17" height="9" viewBox="0 0 17 9"><path d="M0.5 3.1 H10.2 V0.4 L16.2 4.5 L10.2 8.6 V5.9 H0.5 Z" fill="#5b8fd0"/><path d="M0.5 3.1 H10.2 V0.4 L16.2 4.5 Z" fill="#7aa7de" opacity=".7"/></svg>
<div class="c" style="left:803px;top:413.94px;letter-spacing:-0.15px">FG7894</div>
<div class="c" style="left:1006px;top:413.94px;letter-spacing:0.25px">01/01/2026</div>
<div class="hl" style="top:431px"></div>
<div class="hlg" style="top:431px;left:403px;width:265px"></div>
<div class="c" style="left:20.5px;top:437.75px;letter-spacing:-0.49px">MPL0003</div>
<div class="c" style="left:98px;top:437.75px;transform:scaleX(0.912);transform-origin:0 50%">Kg</div>
<div class="c" style="left:163px;top:437.75px;transform:scaleX(0.833);transform-origin:0 50%">MP</div>
<div class="c r" style="left:283px;width:94.70000000000005px;top:437.75px;letter-spacing:0.02px">1 000,0000</div>
<svg class="abs" style="left:381.9px;top:439.75px" width="17" height="9" viewBox="0 0 17 9"><path d="M0.5 3.1 H10.2 V0.4 L16.2 4.5 L10.2 8.6 V5.9 H0.5 Z" fill="#5b8fd0"/><path d="M0.5 3.1 H10.2 V0.4 L16.2 4.5 Z" fill="#7aa7de" opacity=".7"/></svg>
<div class="c" style="left:803px;top:437.75px;letter-spacing:-0.15px">EG1234</div>
<div class="c" style="left:1006px;top:437.75px;letter-spacing:0.25px">01/01/2026</div>
<div class="hl" style="top:455px"></div>
<div class="hlg" style="top:455px;left:403px;width:265px"></div>
<div class="c" style="left:20.5px;top:461.57px;letter-spacing:-0.564px">MPP0005</div>
<div class="c" style="left:98px;top:461.57px;transform:scaleX(0.912);transform-origin:0 50%">Kg</div>
<div class="c" style="left:163px;top:461.57px;letter-spacing:-0.031px">Palette Pré-Pesée /...</div>
<div class="c r" style="left:283px;width:94.70000000000005px;top:461.57px;letter-spacing:0.02px">19,0000</div>
<svg class="abs" style="left:381.9px;top:463.57px" width="17" height="9" viewBox="0 0 17 9"><path d="M0.5 3.1 H10.2 V0.4 L16.2 4.5 L10.2 8.6 V5.9 H0.5 Z" fill="#5b8fd0"/><path d="M0.5 3.1 H10.2 V0.4 L16.2 4.5 Z" fill="#7aa7de" opacity=".7"/></svg>
<div class="c" style="left:803px;top:461.57px;letter-spacing:-0.15px">AB1234</div>
<div class="c" style="left:1006px;top:461.57px;letter-spacing:0.25px">31/05/2024</div>
<div class="hl" style="top:479px"></div>
<div class="hlg" style="top:479px;left:403px;width:265px"></div>
<div class="c" style="left:20.5px;top:485.38px;letter-spacing:-0.564px">MPP0021</div>
<div class="c" style="left:98px;top:485.38px;transform:scaleX(0.912);transform-origin:0 50%">Kg</div>
<div class="c" style="left:163px;top:485.38px;transform:scaleX(0.833);transform-origin:0 50%">MP</div>
<div class="c r" style="left:283px;width:94.70000000000005px;top:485.38px;letter-spacing:0.02px">25,0000</div>
<svg class="abs" style="left:381.9px;top:487.38px" width="17" height="9" viewBox="0 0 17 9"><path d="M0.5 3.1 H10.2 V0.4 L16.2 4.5 L10.2 8.6 V5.9 H0.5 Z" fill="#5b8fd0"/><path d="M0.5 3.1 H10.2 V0.4 L16.2 4.5 Z" fill="#7aa7de" opacity=".7"/></svg>
<div class="c" style="left:803px;top:485.38px;letter-spacing:-0.15px">GR7894</div>
<div class="c" style="left:1006px;top:485.38px;letter-spacing:0.25px">01/01/2025</div>
<div class="hl" style="top:502px"></div>
<div class="hlg" style="top:502px;left:403px;width:265px"></div>
<div class="c" style="left:20.5px;top:509.2px;letter-spacing:-0.564px">MPP0021</div>
<div class="c" style="left:98px;top:509.2px;transform:scaleX(0.912);transform-origin:0 50%">Kg</div>
<div class="c" style="left:163px;top:509.2px;transform:scaleX(0.833);transform-origin:0 50%">MP</div>
<div class="c r" style="left:283px;width:94.70000000000005px;top:509.2px;letter-spacing:0.02px">25,0000</div>
<svg class="abs" style="left:381.9px;top:511.2px" width="17" height="9" viewBox="0 0 17 9"><path d="M0.5 3.1 H10.2 V0.4 L16.2 4.5 L10.2 8.6 V5.9 H0.5 Z" fill="#5b8fd0"/><path d="M0.5 3.1 H10.2 V0.4 L16.2 4.5 Z" fill="#7aa7de" opacity=".7"/></svg>
<div class="c" style="left:803px;top:509.2px;letter-spacing:-0.15px">AB1234</div>
<div class="c" style="left:1006px;top:509.2px;letter-spacing:0.25px">31/05/2024</div>
<div class="hl" style="top:526px"></div>
<div class="hlg" style="top:526px;left:403px;width:265px"></div>
<div class="c" style="left:20.5px;top:533.01px;letter-spacing:-0.564px">MPP0003</div>
<div class="c" style="left:98px;top:533.01px;letter-spacing:-0.492px">Sac25Kg</div>
<div class="c" style="left:163px;top:533.01px;letter-spacing:-0.031px">Palette Pré-Pesée /...</div>
<div class="c r" style="left:283px;width:94.70000000000005px;top:533.01px;letter-spacing:0.02px">1,3420</div>
<svg class="abs" style="left:381.9px;top:535.01px" width="17" height="9" viewBox="0 0 17 9"><path d="M0.5 3.1 H10.2 V0.4 L16.2 4.5 L10.2 8.6 V5.9 H0.5 Z" fill="#5b8fd0"/><path d="M0.5 3.1 H10.2 V0.4 L16.2 4.5 Z" fill="#7aa7de" opacity=".7"/></svg>
<div class="c" style="left:803px;top:533.01px;letter-spacing:-0.15px">AB1234</div>
<div class="c" style="left:1006px;top:533.01px;letter-spacing:0.25px">31/05/2023</div>
<div class="vl" style="left:16px"></div>
<div class="vl" style="left:94px"></div>
<div class="vl" style="left:159px"></div>
<div class="vl" style="left:274px"></div>
<div class="vl" style="left:402px"></div>
<div class="vlg" style="left:528px"></div>
<div class="vl" style="left:668px"></div>
<div class="vl" style="left:798px"></div>
<div class="vl" style="left:1001px"></div>
<svg class="abs" style="left:4.5px;top:7px" width="7" height="10" viewBox="0 0 7 10"><circle cx="3.4" cy="3.6" r="1.5" fill="none" stroke="#222" stroke-width="1.25"/><path d="M3.4 5 V8.6" stroke="#222" stroke-width="1.2"/></svg>
<svg class="abs" style="left:6px;top:34.5px" width="5" height="8" viewBox="0 0 5 8"><path d="M0.3 0.3 L4.3 4 L0.3 7.7Z" fill="#111"/></svg>
</div>
<div class="abs" style="left:1120px;top:20px;width:17px;height:547px;background:#fdfdfd"></div>
<div class="abs" style="left:1124px;top:39px;width:7px;height:382px;background:linear-gradient(90deg,#d2d4d8,#e6e8eb 45%,#cfd1d5);border:1px solid #b2b4b9;border-radius:3px"></div>
<div class="abs" style="left:1124.5px;top:27px;border:3.5px solid transparent;border-bottom:4px solid #6a6a6e;border-top:none"></div>
<div class="abs" style="left:1124.5px;top:556.5px;border:3.5px solid transparent;border-top:4px solid #6a6a6e;border-bottom:none"></div>
</div>
</div>
<div class="abs" style="left:1303.4px;top:139px;width:145.8px;height:47.4px;background:#5b9bd5;border-radius:8px 0 8px 0"></div>
<div class="abs" style="left:1303.4px;top:140px;width:145.8px;height:47.4px;line-height:47px;text-align:center;color:#fff;font-size:23px;white-space:pre">Inventaire</div>
<div class="abs" style="left:1299.6px;top:210.3px;width:321.8px;height:102.8px;background:linear-gradient(#7cba5a 0%,#6aab45 50%,#5c9d36 100%);box-shadow:0.5px 2.5px 4px rgba(0,0,0,.42)"></div>
<div class="abs" style="left:1313.5px;top:216.5px;color:#fff;font-size:22.65px;line-height:30px;white-space:pre">Possibilité de restreindre
l’inventaire à une zone ou à
un article</div>

</body>
</html>
